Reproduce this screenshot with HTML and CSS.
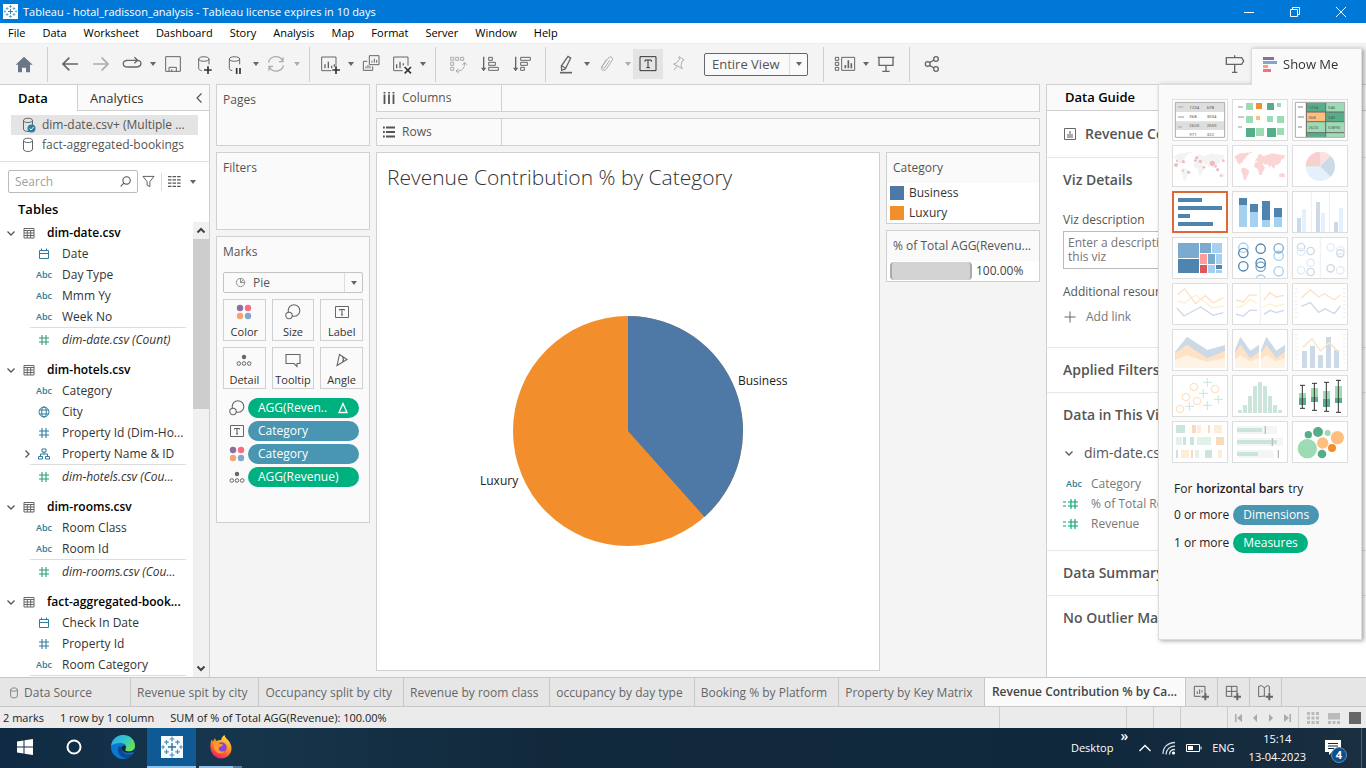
FILE: index.html
```html
<!DOCTYPE html>
<html lang="en">
<head>
<meta charset="utf-8">
<title>Tableau - hotal_radisson_analysis</title>
<link rel="stylesheet" href="styles.css">
</head>
<body>
<svg class="defs" aria-hidden="true">
  <symbol id="i-table" viewBox="0 0 12 12"><path d="M1 1.5h10v9.5H1zM1 3.5h10M1 6h10M1 8.500h10M4.300 3.500v7.500M7.700 3.500v7.500" fill="none" stroke="#666"/></symbol>
  <symbol id="i-down" viewBox="0 0 12 12"><path d="M2.500 4.500 6 8l3.500-3.500" fill="none" stroke="#555" stroke-width="1.300"/></symbol>
  <symbol id="i-right" viewBox="0 0 12 12"><path d="M4.500 2.500 8 6 4.500 9.500" fill="none" stroke="#555" stroke-width="1.300"/></symbol>
  <symbol id="i-cal" viewBox="0 0 12 12"><path d="M1.500 2.500h9v8h-9zM1.500 5.500h9M3.500 .5v2M8.500 .5v2" fill="none" stroke="#2e7d9c"/></symbol>
  <symbol id="i-hash" viewBox="0 0 12 12"><path d="M4 1v10M8 1v10M1 4h10M1 8h10" fill="none" stroke="currentColor" stroke-width="1.100"/></symbol>
  <symbol id="i-measure" viewBox="0 0 16 12"><path d="M8 1v10M12 1v10M5 4h10M5 8h10M0 4h3M0 8h3" fill="none" stroke="#00a277" stroke-width="1.100"/></symbol>
  <symbol id="i-globe" viewBox="0 0 12 12"><g fill="none" stroke="#2e7d9c"><circle cx="6" cy="6" r="5"/><ellipse cx="6" cy="6" rx="2.300" ry="5"/><path d="M1.500 4h9M1.500 8h9"/></g></symbol>
  <symbol id="i-hier" viewBox="0 0 12 12"><path d="M4 1h4v3H4zM.5 8.500h4v2.500h-4zM7.500 8.500h4v2.500h-4zM6 4v2M2.500 8.500V6h7v2.500" fill="none" stroke="#2e7d9c"/></symbol>
  <symbol id="i-db" viewBox="0 0 12 16"><path d="M1.500 3.500v8.500c0 3.300 9 3.300 9 0V3.500c0-3-9-3-9 0 0 2.700 9 2.700 9 0" fill="none" stroke="#666"/></symbol>
  <symbol id="i-colors" viewBox="0 0 16 16"><circle cx="4" cy="4" r="3.200" fill="#8c6f9c"/><circle cx="12" cy="4" r="3.200" fill="#fa6d80"/><circle cx="4" cy="12" r="3.200" fill="#f4a471"/><circle cx="12" cy="12" r="3.200" fill="#83a6cd"/></symbol>
  <symbol id="i-size" viewBox="0 0 16 16"><g fill="none" stroke="#666" stroke-width="1.100"><circle cx="9" cy="6.500" r="5.800"/><circle cx="4" cy="11.500" r="3.200" fill="#fafafa"/></g></symbol>
  <symbol id="i-label" viewBox="0 0 16 16"><path d="M1.500 2.500h13v11h-13z" fill="none" stroke="#666"/><path d="M5.500 6.500v-1h5v1M8 5.500v5.500M7 11h2" fill="none" stroke="#555"/></symbol>
  <symbol id="i-detail" viewBox="0 0 16 16"><circle cx="8" cy="5" r="2.200" fill="#666"/><g fill="none" stroke="#666"><circle cx="2.800" cy="11.500" r="1.800"/><circle cx="8" cy="11.500" r="1.800"/><circle cx="13.200" cy="11.500" r="1.800"/></g></symbol>
  <symbol id="i-logo" viewBox="0 0 24 24"><path d="M12 8v8M8 12h8" stroke="#2a6fa5" stroke-width="1.400"/><path d="M12 1.500v5M9.500 4h5M12 17.500v5M9.500 20h5M6.500 5v4.500M4.300 7.200h4.500M17.500 5v4.500M15.300 7.200h4.500M6.500 14.500V19M4.300 16.800h4.500M17.500 14.500V19M15.300 16.800h4.500M3 10.300v3.400M1.300 12h3.400M21 10.300v3.400M19.300 12h3.400" stroke="#4a90bd" stroke-width="1.200"/></symbol>
</svg>

<header class="titlebar">
  <svg class="applogo" viewBox="0 0 24 24"><rect width="24" height="24" fill="#fff"/><use href="#i-logo"/></svg>
  <span>Tableau - hotal_radisson_analysis - Tableau license expires in 10 days</span>
  <div class="wincontrols">
    <button aria-label="Minimize"><svg viewBox="0 0 12 12"><path d="M1 6.500h10"/></svg></button>
    <button aria-label="Restore"><svg viewBox="0 0 12 12"><path d="M1.500 3.500h7v7h-7zM3.500 3.500v-2h7v7h-2"/></svg></button>
    <button aria-label="Close"><svg viewBox="0 0 12 12"><path d="M1 1l10 10M11 1 1 11"/></svg></button>
  </div>
</header>

<nav class="menubar">
  <button>File</button><button>Data</button><button>Worksheet</button><button>Dashboard</button><button>Story</button><button>Analysis</button><button>Map</button><button>Format</button><button>Server</button><button>Window</button><button>Help</button>
</nav>

<div class="toolbar">
  <div class="tgroup home">
    <button aria-label="Start"><svg viewBox="36 156 72 72"><path d="M72 170 47 194h7v23h12v-14h12v14h12v-23h8z" fill="#6b7786"/></svg></button>
  </div>
  <div class="tgroup">
    <button aria-label="Undo"><svg viewBox="174 156 72 72"><path d="M234 192h-45M208 173l-19 19 19 19" class="s5"/></svg></button>
    <button aria-label="Redo" class="dim"><svg viewBox="270 156 72 72"><path d="M282 192h45M308 173l19 19-19 19" class="s5"/></svg></button>
    <button aria-label="Replay"><svg viewBox="360 156 72 72"><path d="M384 181c-19 0-19 20 0 20h24c19 0 19-20 4-20M378 181h34M403 172l10 9-10 9" class="s4"/></svg></button>
    <i class="caret"></i>
    <button aria-label="Save"><svg viewBox="486 156 72 72"><path d="M500 170h44v44h-44zM510 214v-12h22v12M518 214v-6" class="s3"/></svg></button>
    <button aria-label="New data source"><svg viewBox="579 156 72 72"><path d="M608 212c-6-1-9-4-9-7v-28c0-9 31-9 31 0v16M599 177c0 9 31 9 31 0" class="s3"/><path d="M627 199v23M615 210h23" class="k5"/></svg></button>
    <button aria-label="Pause updates"><svg viewBox="672 156 72 72"><path d="M700 212c-6-1-9-4-9-7v-28c0-9 31-9 31 0v16M691 177c0 9 31 9 31 0" class="s3"/><path d="M713 204v18M723 204v18" class="k5"/></svg></button>
    <i class="caret"></i>
    <button aria-label="Run update" class="dim"><svg viewBox="792 156 72 72"><path d="M806 188c3-22 34-25 42-4M850 196c-3 20-33 24-42 4M849 172v13h-12M807 212v-13h12" class="s4"/></svg></button>
    <i class="caret dim"></i>
  </div>
  <div class="tgroup sheets">
    <button aria-label="New worksheet"><svg viewBox="954 156 72 72"><path d="M994 212h-29v-41h43v26" class="s3"/><path d="M975 205v-12M985 205v-20M995 205v-8M1003 200v-7" class="s4"/><path d="M1008 199v23M997 210h23" class="k5"/></svg></button>
    <i class="caret"></i>
    <button aria-label="Duplicate"><svg viewBox="1078 156 72 72"><path d="M1109 167h29v27h-29zM1103 184h-12v27h28v-12" class="s3"/><path d="M1117 188v-6M1124 188v-12M1131 188v-8M1099 205v-6M1105 205v-10M1111 205v-7" class="s3"/></svg></button>
    <button aria-label="Clear sheet"><svg viewBox="1170 156 72 72"><path d="M1208 212h-27v-41h43v26" class="s3"/><path d="M1190 205v-12M1200 205v-20M1210 196v-6" class="s4"/><path d="M1214 201l19 19M1233 201l-19 19" class="k5"/></svg></button>
    <i class="caret"></i>
  </div>
  <div class="tgroup sorts">
    <button aria-label="Swap" class="dim"><svg viewBox="15 156 72 72"><path d="M29 172h9v9h-9zM44 172h9v9h-9zM59 172h9v9h-9zM29 187h9v9h-9zM29 202h9v9h-9zM45 213c18 2 26-8 26-25M53 206l-8 7 8 7M64 195l7-8 6 8" class="s3"/></svg></button>
    <button aria-label="Sort ascending"><svg viewBox="114 156 72 72"><path d="M131 170v36" class="s4"/><path d="M123 203h16l-8 11z" fill="#666"/><path d="M146 172h11v9h-11zM146 187h20v9h-20zM146 202h29v9h-29z" class="s3"/></svg></button>
    <button aria-label="Sort descending"><svg viewBox="210 156 72 72"><path d="M227 170v36" class="s4"/><path d="M219 203h16l-8 11z" fill="#666"/><path d="M242 172h29v9h-29zM242 187h20v9h-20zM242 202h11v9h-11z" class="s3"/></svg></button>
  </div>
  <div class="tgroup marksgroup">
    <button aria-label="Highlight"><svg viewBox="348 156 72 72"><path d="M390 169l8 5-16 33-11 4-1-13zM372 198l10 6" class="s4"/><path d="M366 218h36" class="s5"/></svg></button>
    <i class="caret"></i>
    <button aria-label="Group" class="dim"><svg viewBox="459 156 72 72"><path d="M503 181l-14 21c-3 6-11 1-7-5l16-22c7-9 18-2 12 7l-17 25c-8 9-18 2-14-6l14-22" class="s3"/></svg></button>
    <i class="caret dim"></i>
    <button aria-label="Show mark labels" class="on"><svg viewBox="586 156 72 72"><path d="M598 170h48v42h-48z" class="k3"/><path d="M613 185v-5h19v5M622 180v23M617 203h11" class="k3"/></svg></button>
    <button aria-label="Fix axes" class="dim"><svg viewBox="675 156 72 72"><path d="M711 170l15 10-6 4-3 13 4 9-26-14 7-2 10-11zM705 199l-9 11" class="s3"/></svg></button>
  </div>
  <div class="tgroup fit">
    <div class="selectbox"><select aria-label="Fit"><option>Entire View</option></select><i class="caret"></i></div>
  </div>
  <div class="tgroup cardsgroup">
    <button aria-label="Show/Hide cards"><svg viewBox="1182 156 72 72"><path d="M1189 172h10v9h-10zM1189 187h10v9h-10zM1189 202h10v9h-10zM1208 172h39v39h-39z" class="s3"/><path d="M1219 205v-10M1228 205v-24M1237 205v-15" class="s5"/></svg></button>
    <i class="caret"></i>
    <button aria-label="Presentation mode"><svg viewBox="1300 156 72 72"><path d="M1311 172h50M1315 172h42v24h-42zM1336 196v17M1325 214h22" class="s4"/></svg></button>
  </div>
  <div class="tgroup share">
    <button aria-label="Share"><svg viewBox="1440 156 72 72"><g class="s4"><circle cx="1463" cy="192" r="7"/><circle cx="1488" cy="177" r="7"/><circle cx="1488" cy="207" r="7"/><path d="M1469 188l13-8M1469 196l13 8"/></g></svg></button>
  </div>
  <button class="guidebtn" aria-label="Data Guide"><svg viewBox="789 156 72 72"><path d="M799 173h46l6 10-6 10h-46zM824 166v7M824 193v24M816 217h16" class="s4"/></svg></button>
</div>

<main class="workspace">
  <aside class="datapane">
    <div class="panetabs"><button class="active">Data</button><button>Analytics <svg viewBox="0 0 12 12"><path d="M8.500 1.500 4 6l4.500 4.500" fill="none" stroke="#555" stroke-width="1.200"/></svg></button></div>
    <div class="sources">
      <a href="#" class="sel"><svg viewBox="0 0 14 16"><use href="#i-db" width="12" height="16"/><circle cx="9.500" cy="11.500" r="4" fill="#2a7fa6"/><path d="M7.500 11.500l1.500 1.500 2.500-3" fill="none" stroke="#fff"/></svg>dim-date.csv+ (Multiple ...</a>
      <a href="#"><svg viewBox="0 0 14 16"><use href="#i-db" width="12" height="16"/></svg>fact-aggregated-bookings</a>
    </div>
    <div class="searchrow">
      <div class="search"><input type="text" aria-label="Search" placeholder="Search"><svg viewBox="0 0 12 12"><circle cx="7" cy="5" r="3.400"/><path d="M4.500 7.500 1.500 10.500"/></svg></div>
      <button aria-label="Filter fields"><svg viewBox="0 0 14 14"><path d="M1 1.500h12L8.500 7v5.500l-3-1.500V7z" fill="none" stroke="#555"/></svg></button>
      <button class="viewas" aria-label="View options"><svg viewBox="0 0 12 12"><path d="M0 1.500h12M0 4.500h12M0 7.500h12M0 10.500h12" stroke="#555" stroke-width="1.200" stroke-dasharray="3.200 1"/></svg><i class="caret"></i></button>
    </div>
    <h2>Tables</h2>
    <div class="treewrap">
      <div class="tree">
        <section>
          <h3><svg><use href="#i-down"/></svg><svg><use href="#i-table"/></svg>dim-date.csv</h3>
          <ul>
            <li><svg><use href="#i-cal"/></svg>Date</li>
            <li><b>Abc</b>Day Type</li>
            <li><b>Abc</b>Mmm Yy</li>
            <li><b>Abc</b>Week No</li>
            <li class="count"><svg><use href="#i-hash"/></svg>dim-date.csv (Count)</li>
          </ul>
        </section>
        <section>
          <h3><svg><use href="#i-down"/></svg><svg><use href="#i-table"/></svg>dim-hotels.csv</h3>
          <ul>
            <li><b>Abc</b>Category</li>
            <li><svg><use href="#i-globe"/></svg>City</li>
            <li><svg><use href="#i-hash"/></svg>Property Id (Dim-Ho...</li>
            <li class="hier"><svg><use href="#i-right"/></svg><svg><use href="#i-hier"/></svg>Property Name &amp; ID</li>
            <li class="count"><svg><use href="#i-hash"/></svg>dim-hotels.csv (Cou...</li>
          </ul>
        </section>
        <section>
          <h3><svg><use href="#i-down"/></svg><svg><use href="#i-table"/></svg>dim-rooms.csv</h3>
          <ul>
            <li><b>Abc</b>Room Class</li>
            <li><b>Abc</b>Room Id</li>
            <li class="count"><svg><use href="#i-hash"/></svg>dim-rooms.csv (Cou...</li>
          </ul>
        </section>
        <section>
          <h3><svg><use href="#i-down"/></svg><svg><use href="#i-table"/></svg>fact-aggregated-book...</h3>
          <ul>
            <li><svg><use href="#i-cal"/></svg>Check In Date</li>
            <li><svg><use href="#i-hash"/></svg>Property Id</li>
            <li><b>Abc</b>Room Category</li>
            <li class="count"></li>
          </ul>
        </section>
      </div>
      <div class="scrollbar"><svg viewBox="0 0 12 12"><path d="M2.500 8 6 4.500 9.500 8"/></svg><i></i><svg viewBox="0 0 12 12"><path d="M2.500 4 6 7.500 9.500 4"/></svg></div>
    </div>
  </aside>

  <div class="shelves">
    <section class="card pages"><h4>Pages</h4></section>
    <section class="card filters"><h4>Filters</h4></section>
    <section class="card marks">
      <h4>Marks</h4>
      <div class="selectbox marktype"><svg viewBox="0 0 12 12"><g fill="none" stroke="#888"><circle cx="6" cy="6" r="4.500"/><path d="M6 1.500V6h4.500M6 6l3-3"/></g></svg><select aria-label="Mark type"><option>Pie</option></select><i class="caret"></i></div>
      <div class="markbtns">
        <button><svg><use href="#i-colors"/></svg>Color</button>
        <button><svg><use href="#i-size"/></svg>Size</button>
        <button><svg><use href="#i-label"/></svg>Label</button>
        <button><svg><use href="#i-detail"/></svg>Detail</button>
        <button><svg viewBox="0 0 16 16"><path d="M1 2.500h14v9h-3v3l-3-3H1z" fill="none" stroke="#666" stroke-width="1.100"/></svg>Tooltip</button>
        <button><svg viewBox="0 0 16 16"><path d="M3 13.500 5.500 2.500l7.500 5zM8.500 4.500c1.200 2 1.200 4 0 6" fill="none" stroke="#666" stroke-width="1.100"/></svg>Angle</button>
      </div>
      <ul class="pills">
        <li><svg><use href="#i-size"/></svg><button class="pill measure">AGG(Reven..<svg viewBox="0 0 12 12"><path d="M6 1.500 10 10.500H2z" fill="none" stroke="#fff" stroke-width="1.300"/></svg></button></li>
        <li><svg><use href="#i-label"/></svg><button class="pill">Category</button></li>
        <li><svg><use href="#i-colors"/></svg><button class="pill">Category</button></li>
        <li><svg><use href="#i-detail"/></svg><button class="pill measure">AGG(Revenue)</button></li>
      </ul>
    </section>
  </div>

  <div class="sheet">
    <div class="shelf"><span><svg viewBox="0 0 12 12"><path d="M1.500 0v1.500M6 0v1.500M10.500 0v1.500M1.500 2.500V12M6 2.500V12M10.500 2.500V12" stroke="#555" stroke-width="1.800"/></svg>Columns</span></div>
    <div class="shelf"><span><svg viewBox="0 0 12 12"><path d="M0 1.500h1.800M0 6h1.800M0 10.500h1.800M3 1.500h9M3 6h9M3 10.500h9" stroke="#555" stroke-width="1.800"/></svg>Rows</span></div>
    <div class="viewrow">
      <section class="view">
        <h1>Revenue Contribution % by Category</h1>
        <svg class="pie" viewBox="0 0 330 232" role="img" aria-label="Revenue share of Business and Luxury">
          <circle cx="165" cy="116" r="115" fill="#f28e2b"/>
          <path d="M165 116V1A115 115 0 0 1 241.500 201.900z" fill="#4e79a7"/>
          <text x="275" y="70">Business</text><text x="17" y="170">Luxury</text>
        </svg>
      </section>
      <div class="legends">
        <section class="card legend"><h4>Category</h4><ul><li><i class="business"></i>Business</li><li><i class="luxury"></i>Luxury</li></ul></section>
        <section class="card legend"><h4>% of Total AGG(Revenu...</h4><div class="sizekey"><i></i>100.00%</div></section>
      </div>
    </div>
  </div>

  <aside class="guide">
    <h2>Data Guide</h2>
    <div class="gname"><svg viewBox="0 0 12 12"><path d="M.5.5h11v11H.5z" fill="none" stroke="#666"/><path d="M3 6h2V3h2v3h2v4H3z" fill="#aaa"/></svg>Revenue Contribution</div>
    <div class="gsec details">
      <h3>Viz Details</h3>
      <label for="vizdesc">Viz description</label>
      <textarea id="vizdesc" placeholder="Enter a description for&#10;this viz"></textarea>
      <p>Additional resources</p>
      <button><svg viewBox="0 0 12 12"><path d="M6 .5v11M.5 6h11" stroke="#666"/></svg>Add link</button>
    </div>
    <div class="gsec"><h3>Applied Filters</h3></div>
    <div class="gsec fields">
      <h3>Data in This Viz</h3>
      <h4><svg><use href="#i-down"/></svg>dim-date.csv+</h4>
      <ul><li><b>Abc</b>Category</li><li><svg><use href="#i-measure"/></svg>% of Total Revenue</li><li><svg><use href="#i-measure"/></svg>Revenue</li></ul>
    </div>
    <div class="gsec"><h3>Data Summary</h3></div>
    <div class="gsec last"><h3>No Outlier Marks</h3></div>
  </aside>
</main>

<nav class="sheettabs">
  <button class="source"><svg><use href="#i-db"/></svg>Data Source</button>
  <button>Revenue spit by city</button><button>Occupancy split by city</button><button>Revenue by room class</button><button>occupancy by day type</button><button>Booking % by Platform</button><button>Property by Key Matrix</button>
  <button class="current">Revenue Contribution % by Ca...</button>
  <button class="add" aria-label="New Worksheet"><svg viewBox="699 25 54 60"><path d="M725 68h-19V38h32v20" class="s3"/><path d="M715 61v-8M722 61V47M729 56v-6" class="s3"/><path d="M739 58v22M728 69h22" class="s6"/></svg></button>
  <button class="add" aria-label="New Dashboard"><svg viewBox="795 25 54 60"><path d="M821 68h-19V38h32v20M802 53h32M818 38v30" class="s3"/><path d="M835 58v22M824 69h22" class="s6"/></svg></button>
  <button class="add" aria-label="New Story"><svg viewBox="891 25 54 60"><path d="M916 69v-2l-17 2V38l8-2 9 6 9-6 6 2v19M916 42v27" class="s3"/><path d="M931 58v22M920 69h22" class="s6"/></svg></button>
</nav>

<footer class="status">
  <span>2 marks</span><span>1 row by 1 column</span><span>SUM of % of Total AGG(Revenue): 100.00%</span>
  <div class="cells"><i class="wide"></i><i></i><i></i><i class="mid"></i>
    <div class="pager"><svg viewBox="0 0 12 12"><path d="M2 2h1.500v8H2zM9 2v8L4 6z"/></svg><svg viewBox="0 0 12 12"><path d="M8 2v8L4 6z"/></svg><svg viewBox="0 0 12 12"><path d="M4 2v8l4-4z"/></svg><svg viewBox="0 0 12 12"><path d="M3 2v8l5-4zM8.500 2H10v8H8.500z"/></svg></div>
    <div class="modes"><svg viewBox="0 0 12 12"><path d="M0 0h3v3H0zM4.500 0h3v3h-3zM9 0h3v3H9zM0 4.500h3v3H0zM4.500 4.500h3v3h-3zM9 4.500h3v3H9zM0 9h3v3H0zM4.500 9h3v3h-3zM9 9h3v3H9z"/></svg><svg viewBox="0 0 12 12"><path d="M0 1h12v6.500H0zM0 9h3v3H0zM4.500 9h3v3h-3zM9 9h3v3H9z"/></svg><svg class="dark" viewBox="0 0 12 12"><path d="M0 0h12v12H0z"/></svg></div>
  </div>
</footer>

<footer class="taskbar">
  <button aria-label="Start"><svg viewBox="0 0 24 24"><path d="M4 6.500l6.500-1v6H4zM11.500 5.300 20 4v7.500h-8.500zM4 12.500h6.500v6L4 17.500zM11.500 12.500H20V20l-8.500-1.300z" fill="#fff"/></svg></button>
  <button aria-label="Cortana"><svg viewBox="0 0 24 24"><circle cx="12" cy="12" r="6.500" fill="none" stroke="#fff" stroke-width="2"/></svg></button>
  <button aria-label="Edge"><svg viewBox="0 0 24 24"><defs><linearGradient id="eg" x1="0" y1="0" x2="1" y2=".6"><stop offset="0" stop-color="#2aa6e8"/><stop offset=".6" stop-color="#38c9c8"/><stop offset="1" stop-color="#6ae24a"/></linearGradient></defs><circle cx="12" cy="12" r="12" fill="#0b78cf"/><path d="M.2 11C1 4 6 0 12 0c7 0 12 5 12 10.500 0 4-3 6-6.500 6-3 0-4-1-3-2.500 2-4-1-6-5-6-4 0-8 1-9.300 3z" fill="url(#eg)"/><path d="M8 11c-3 5 0 12 8 12.300 3-1 5-3 6.500-5-7 3-13-1-12-5.500z" fill="#0c4a8f"/><path d="M10.500 12c-1 3.500 3 7.500 12.500 5l1-4c-1 2.500-4 3.700-6.500 3.500-3 0-4-1-3-2.500.5-1 .5-2.500-.5-3.500-1.500 0-3 .5-3.500 1.500z" fill="#12293c"/></svg></button>
  <button class="active" aria-label="Tableau"><svg viewBox="0 0 24 24"><rect x="1" y="1" width="22" height="22" fill="#f8fafc"/><use href="#i-logo"/></svg></button>
  <button class="running" aria-label="Firefox"><svg viewBox="0 0 24 24"><defs><linearGradient id="fx" x1=".8" y1="0" x2=".3" y2="1"><stop offset="0" stop-color="#ffe94a"/><stop offset=".5" stop-color="#ff8a1f"/><stop offset="1" stop-color="#f5156c"/></linearGradient></defs><path d="M2.500 4.500 4 6.500 6 3l1 3c2-1 4-1 5-1 1-3 2-4 3.500-5 .5 3 3 4 5 7 5 8 0 16.500-8.500 16.500C4 23.500-1 15 2.500 4.500z" fill="url(#fx)"/><circle cx="12.500" cy="12.500" r="5.200" fill="#8445d8"/><path d="M4 8c3-1.500 5-.5 7 1 2 0 3 .5 3 1.500l-4 2c-1 4 4 5 6 3-1 4-8 4-10 0S5 9 4 8z" fill="#ff9a2a"/></svg></button>
  <div class="tray">
    <span>Desktop</span><span class="more">»</span>
    <svg viewBox="0 0 14 14"><path d="M1.500 10 7 4.500l5.500 5.500" fill="none" stroke="#fff" stroke-width="1.300"/></svg>
    <svg viewBox="0 0 14 14"><g fill="none" stroke="#d5dce2" stroke-width="1.300"><path d="M1 13C1 6 6 2 13 1.500M4 13.500c0-5 4-8.500 9-8.500M7.500 13.500c0-3 2-5 5.500-5"/></g><circle cx="11.500" cy="12" r="1.600" fill="#fff"/></svg>
    <svg class="battery" viewBox="0 0 16 14"><path d="M.5 3.500h13v7H.5zM15 5.500v3" fill="none" stroke="#fff"/><path d="M2 5h5v4H2z" fill="#fff"/></svg>
    <span>ENG</span>
    <div class="clock"><time>15:14</time><time>13-04-2023</time></div>
    <button class="notify" aria-label="Notifications"><svg viewBox="0 0 18 18"><path d="M1 1h16v12H8l-3 3v-3H1z" fill="#fff"/><path d="M4 4.500h10M4 7h10M4 9.500h6" stroke="#12293c"/></svg><b>4</b></button>
  </div>
</footer>

<section class="showme">
  <button class="smtab"><svg viewBox="0 0 14 15"><path d="M0 0h11v3H0z" fill="#8c6f9c"/><path d="M0 4h14v3H0z" fill="#83a6cd"/><path d="M0 8h5v3H0z" fill="#f4a471"/><path d="M0 12h8v3H0z" fill="#fa6d80"/></svg>Show Me</button>
  <div class="smbody">
    <div class="smgrid">
      <button aria-label="text tables"><svg viewBox="39 30 162 120"><path d="M46 37h148v105H46z" fill="#fff"/><path d="M47 38h146v28H47zM47 94h146v26H47z" fill="#dedede"/><path d="M46 37h148v105H46z" fill="none" stroke="#aaa" stroke-width="3"/><path d="M54 51h16M54 81h18M54 111h12" stroke="#bbb" stroke-width="5"/><g class="tiny"><text x="88" y="57">1234</text><text x="140" y="57">678</text><text x="88" y="84">368</text><text x="140" y="84">3034</text><text x="88" y="111">2620</text><text x="140" y="111">2559</text><text x="88" y="138">971</text><text x="140" y="138">322</text></g></svg></button>
      <button aria-label="heat maps"><svg viewBox="219 30 162 120"><path d="M234 51h15M234 81h18M234 111h12" stroke="#bbb" stroke-width="5"/><path d="M258 39h21v21h-21zM351 39h12v12h-12zM258 78h21v21h-21zM321 78h18v18h-18zM351 78h21v21h-21zM288 114h24v24h-24zM351 114h21v21h-21z" fill="#9ddbb4"/><path d="M321 39h21v21h-21zM258 114h27v27h-27zM321 114h27v27h-27z" fill="#56ad89"/><path d="M288 39h18v18h-18z" fill="#f28e2b"/><path d="M288 78h12v12h-12z" fill="#ffbe7d"/></svg></button>
      <button aria-label="highlight tables"><svg viewBox="399 30 162 120"><path d="M439 37h58v29h-58zM497 66h57v29h-57zM439 128h58v14h-58z" fill="#56ad89"/><path d="M497 37h57v29h-57zM439 95h115v33H439zM497 128h57v14h-57z" fill="#9ddbb4"/><path d="M439 66h58v29h-58z" fill="#ffbe7d"/><path d="M439 37v105M497 37v105M439 66h115M439 95h115M439 128h115" stroke="#666" stroke-width="3"/><path d="M406 37h148v105H406z" fill="none" stroke="#aaa" stroke-width="3"/><path d="M414 51h15M414 81h18M414 111h12" stroke="#aaa" stroke-width="5"/><g class="tiny"><text x="445" y="56">1234</text><text x="504" y="56">546</text><text x="445" y="86">368</text><text x="504" y="86">340</text><text x="445" y="116">2620</text><text x="504" y="116">53890</text></g></svg></button>
      <button aria-label="symbol maps"><svg class="outline" viewBox="39 168 162 120"><g id="world"><path d="M41 202l10-8 8-4 16-1 8-2 5 4-9 8-4 6-5 5-4 8-8 2 6 7-9-5-6-9-2-7zM65 233l11 2 11 7-4 13-8 15-4 2-3-16-6-14zM104 212l8-11 3-8 8 0 4 6 14-4 14-5 26 4 14 2-4 9-8 4-3 9-7 5-9 3-1 9-6-2-4-8-6 8-5-11-7 3-5-5-7 2-8-6zM103 218l10-2 12 4 9 13-6 12-5 10-6 0-4-18-11-6zM177 252l9-4 8 5-1 9-17-2zM86 186l10-1-4 6z"/></g><g fill="#e9a9ad" opacity=".75"><circle cx="48" cy="225" r="6"/><circle cx="51" cy="213" r="3"/><circle cx="70" cy="215" r="5"/><circle cx="110" cy="203" r="5"/><circle cx="121" cy="214" r="5"/><circle cx="106" cy="212" r="4"/><circle cx="157" cy="220" r="8"/><circle cx="173" cy="239" r="5"/><circle cx="167" cy="229" r="4"/><circle cx="86" cy="247" r="5"/><circle cx="69" cy="242" r="3"/><circle cx="132" cy="232" r="4"/><circle cx="183" cy="257" r="3"/><circle cx="190" cy="212" r="4"/></g></svg></button>
      <button aria-label="maps"><svg class="filled" viewBox="219 168 162 120"><use href="#world" x="181"/></svg></button>
      <button aria-label="pie charts"><svg viewBox="399 168 162 120"><circle cx="481" cy="229" r="44" fill="#e4f1fc"/><path d="M481 229h-44a44 44 0 0 1 44-44z" fill="#f8d0ce"/><path d="M481 229v-44a44 44 0 0 1 31 13z" fill="#fee0e0"/><path d="M481 229l31-31a44 44 0 0 1 0 62z" fill="#ccd9e7"/></svg></button>
      <button class="picked" aria-label="horizontal bars"><svg viewBox="39 306 162 120"><path d="M54 324h72v12H54zM54 348h132v12H54zM54 372h36v12H54zM54 396h105v12H54z" fill="#4e84ad"/></svg></button>
      <button aria-label="stacked bars"><svg viewBox="219 306 162 120"><path d="M237 324h24v87h-24zM270 342h24v69h-24zM306 333h24v78h-24zM342 354h24v57h-24z" fill="#a5d0f0"/><path d="M237 324h24v21h-24zM270 342h24v24h-24zM306 333h24v57h-24zM342 354h24v27h-24z" fill="#4e84ad"/></svg></button>
      <button aria-label="side-by-side bars"><svg viewBox="399 306 162 120"><path d="M454 306v120M508 306v120" stroke="#eee" stroke-width="3"/><path d="M411 384h12v42h-12zM468 336h12v90h-12zM522 396h12v30h-12z" fill="#ccd9e7"/><path d="M426 357h12v69h-12zM483 369h12v57h-12zM537 354h12v72h-12z" fill="#e4f1fc"/></svg></button>
      <button aria-label="treemaps"><svg viewBox="39 444 162 120"><path d="M54 459h63v45H54zM120 459h33v30h-33zM144 492h21v30h-21z" fill="#7aaace"/><path d="M54 507h63v42H54zM168 525h18v12h-18z" fill="#4e84ad"/><path d="M156 459h30v30h-30zM168 492h18v30h-18zM144 525h21v24h-21zM168 540h18v9h-18z" fill="#a5d0f0"/><path d="M120 492h21v30h-21z" fill="#ff9d9a"/><path d="M120 525h21v24h-21z" fill="#e15759"/></svg></button>
      <button aria-label="circle views"><svg viewBox="219 444 162 120"><g fill="none" stroke-width="4"><g stroke="#a5d0f0"><circle cx="250" cy="473" r="14"/><circle cx="356" cy="497" r="14"/><circle cx="356" cy="544" r="14"/><circle cx="302" cy="569" r="14"/></g><g stroke="#7aaace"><circle cx="356" cy="475" r="14"/><circle cx="302" cy="530" r="14"/></g><g stroke="#4e84ad"><circle cx="250" cy="489" r="14"/><circle cx="250" cy="529" r="14"/><circle cx="302" cy="476" r="14"/><circle cx="302" cy="519" r="14"/></g></g></svg></button>
      <button aria-label="side-by-side circles"><svg viewBox="399 444 162 120"><path d="M481 444v120" stroke="#eee" stroke-width="3"/><g fill="none" stroke-width="4"><g stroke="#ccd9e7"><circle cx="423" cy="471" r="11"/><circle cx="452" cy="483" r="11"/><circle cx="452" cy="546" r="11"/><circle cx="541" cy="490" r="11"/><circle cx="512" cy="535" r="11"/></g><g stroke="#e0edf8"><circle cx="423" cy="486" r="11"/><circle cx="452" cy="518" r="11"/><circle cx="423" cy="541" r="11"/><circle cx="512" cy="472" r="11"/><circle cx="541" cy="481" r="11"/><circle cx="541" cy="541" r="11"/></g></g></svg></button>
      <button aria-label="lines (continuous)"><svg class="ln" viewBox="39 24 162 120"><path class="y" d="M51 75l22 6 34-24 50 39 33-6"/><path class="o" d="M53 56l20-18 34 45 29-24 24 22 30-16"/><path class="b" d="M50 96l22 24 50-27 37 25 31-8"/></svg></button>
      <button aria-label="lines (discrete)"><svg class="ln" viewBox="219 24 162 120"><path d="M301 24v120" class="rule"/><path class="y" d="M228 94l22-4 19-20 22 12M309 93l22-9 18 8 23-8"/><path class="o" d="M228 72l22 6 19-22 22 3M312 72l18-23 18 14 24-5"/><path class="b" d="M228 114l22 7 19-18h22M312 115l18-12 18 7 24-7"/></svg></button>
      <button aria-label="dual lines"><svg class="ln" viewBox="399 24 162 120"><path d="M409 37v96M553 37v96" class="ticks"/><path class="o" d="M424 66l27-25 25 22 18-10 29 19 18-15"/><path class="b" d="M424 91l27-11 25 29 19-11 28 15 18-23"/></svg></button>
      <button aria-label="area charts (continuous)"><svg viewBox="39 162 162 120"><path d="M45 227l36-45 61 40 53-15v69H45z" fill="#ccd9e7"/><path d="M45 231l36-25 61 41 53-23v52H45z" fill="#fde2c6"/><path d="M45 252l36-14 61 20 53-13v31H45z" fill="#fff3e5"/></svg></button>
      <button aria-label="area charts (discrete)"><svg viewBox="219 162 162 120"><path d="M225 222l16-40 30 42 26-18v70h-72zM303 222l16-40 30 42 26-18v70h-72z" fill="#ccd9e7"/><path d="M225 232l16-26 30 41 26-20v49h-72zM303 232l16-26 30 41 26-20v49h-72z" fill="#fde2c6"/><path d="M225 250l16-12 30 18 26-10v30h-72zM303 250l16-12 30 18 26-10v30h-72z" fill="#fff3e5"/></svg></button>
      <button aria-label="dual combination"><svg class="ln" viewBox="399 162 162 120"><path d="M409 175v96M553 175v96" class="ticks"/><path d="M426 225h15v51h-15zM450 210h15v66h-15zM474 237h15v39h-15zM498 183h15v93h-15zM522 222h15v54h-15z" fill="#ccd9e7"/><path class="o" d="M429 213l27-25 25 37 26-25 27 26"/></svg></button>
      <button aria-label="scatter plots"><svg viewBox="39 300 162 120"><g fill="none" stroke="#fde2c6" stroke-width="4"><circle cx="102" cy="333" r="11"/><circle cx="165" cy="339" r="11"/><circle cx="78" cy="363" r="11"/><circle cx="111" cy="375" r="11"/><circle cx="60" cy="399" r="11"/></g><path d="M142 306v27M129 319h27M130 339v27M117 352h27M175 357v27M162 370h27M142 375v27M129 388h27M88 378v27M75 391h27" stroke="#cce5db" stroke-width="3"/></svg></button>
      <button aria-label="histogram"><svg viewBox="219 300 162 120"><path d="M234 402h12v9h-12zM249 387h12v24h-12zM264 360h12v51h-12zM279 330h12v81h-12zM294 318h12v93h-12zM309 330h12v81h-12zM324 360h12v51h-12zM339 387h12v24h-12zM354 402h12v9h-12z" fill="#cce5db"/></svg></button>
      <button aria-label="box-and-whisker plots"><svg viewBox="399 300 162 120"><path d="M417 351h21v15h-21zM453 336h21v27h-21zM489 345h21v24h-21zM525 330h21v36h-21z" fill="#9ddbb4"/><path d="M417 366h21v21h-21zM453 363h21v15h-21zM489 369h21v24h-21zM525 366h21v15h-21z" fill="#56ad89"/><path d="M427 328v69M420 328h15M420 397h15M463 322v81M456 322h15M456 403h15M499 319v87M492 319h15M492 406h15M535 313v96M528 313h15M528 409h15" stroke="#333" stroke-width="3"/></svg></button>
      <button aria-label="gantt"><svg viewBox="39 438 162 120"><path d="M48 447h27v24H48zM69 483h9v24h-9zM90 483h12v24H90zM48 522h6v24h-6zM135 522h21v24h-21z" fill="#cce5db"/><path d="M48 483h18v24H48zM111 483h42v24h-42zM105 522h12v24h-12z" fill="#e2f2e9"/><path d="M96 447h12v24H96zM144 447h6v24h-6zM168 483h24v24h-24zM93 522h6v24h-6z" fill="#fbd9bb"/><path d="M111 447h12v24h-12zM162 447h24v24h-24zM63 522h24v24H63zM174 522h12v24h-12z" fill="#feecd9"/></svg></button>
      <button aria-label="bullet graphs"><svg viewBox="219 438 162 120"><path d="M231 450h120v24H231zM231 486h138v24H231zM231 522h110v24H231z" fill="#f5f5f5"/><path d="M231 456h75v12h-75zM231 492h120v12H231zM231 528h63v12h-63z" fill="#cce5db"/><path d="M316 450v24M337 486v24M355 522v24" stroke="#bbb" stroke-width="4"/></svg></button>
      <button aria-label="packed bubbles"><svg viewBox="399 438 162 120"><circle cx="442" cy="518" r="29" fill="#9ddbb4"/><circle cx="503" cy="471" r="9" fill="#9ddbb4"/><g fill="#56ad89"><circle cx="445" cy="476" r="11"/><circle cx="474" cy="468" r="15"/><circle cx="486" cy="534" r="13"/></g><g fill="#ffbe7d"><circle cx="532" cy="485" r="20"/><circle cx="488" cy="501" r="17"/></g><circle cx="516" cy="516" r="12" fill="#f28e2b"/></svg></button>
    </div>
    <p>For <b>horizontal bars</b> try</p>
    <p>0 or more <span class="pill">Dimensions</span></p>
    <p>1 or more <span class="pill measure">Measures</span></p>
  </div>
</section>
</body>
</html>
```
FILE: styles.css
```css
* { box-sizing: border-box; }
body {
  margin: 0;
  height: 100vh;
  display: flex;
  flex-direction: column;
  position: relative;
  overflow: hidden;
  background: #f4f4f4;
  color: #333;
  font: 12px/16px "Open Sans", "Noto Sans", sans-serif;
}
.defs { position: absolute; width: 0; height: 0; }
button {
  font: inherit;
  color: inherit;
  background: none;
  border: 0;
  padding: 0;
  margin: 0;
}
select, input, textarea { font: inherit; color: inherit; }
h1, h2, h3, h4, p, ul { margin: 0; padding: 0; font-weight: 400; font-size: 12px; list-style: none; }
svg { flex: none; width: 12px; height: 12px; }
.caret {
  flex: none;
  width: 9px;
  display: flex;
  justify-content: center;
}
.caret::before {
  content: "";
  border: 3px solid transparent;
  border-top: 4px solid #666;
  border-bottom: 0;
}

/* window chrome */
.titlebar {
  flex: none;
  height: 23px;
  display: flex;
  align-items: center;
  padding: 0 2px 0 3px;
  gap: 5px;
  background: #0078d7;
  color: #fff;
  font-size: 11px;
}
.titlebar .applogo { width: 15px; height: 15px; }
.wincontrols { margin-left: auto; display: flex; }
.wincontrols button { width: 46px; height: 21px; display: flex; justify-content: center; align-items: center; }
.wincontrols svg { fill: none; stroke: #fff; }
.menubar {
  flex: none;
  height: 20px;
  display: flex;
  gap: 17px;
  padding-left: 8px;
  background: #fff;
  color: #000;
  font-size: 11px;
}

/* toolbar */
.toolbar {
  flex: none;
  height: 41px;
  display: flex;
  align-items: center;
  border-top: 1px solid #eee;
  padding-right: 116px;
}
.toolbar .s3, .toolbar .s4, .toolbar .s5 { fill: none; stroke: #666; stroke-width: 3; }
.toolbar .s4 { stroke-width: 4; }
.toolbar .s5 { stroke-width: 5; }
.toolbar .k3, .toolbar .k5 { fill: none; stroke: #333; stroke-width: 3; }
.toolbar .k5 { stroke-width: 5; }
.tgroup {
  display: flex;
  align-items: center;
  gap: 1px;
  height: 35px;
  padding: 0 8px 0 7px;
  border-right: 1px solid #cfcfcf;
}
.tgroup button, .guidebtn { width: 30px; height: 30px; display: flex; align-items: center; justify-content: center; }
.tgroup button svg, .guidebtn svg { width: 24px; height: 24px; }
.tgroup.home { padding-left: 9px; }
.tgroup.sheets { padding-left: 5px; }
.tgroup.sorts { padding-left: 7px; gap: 2px; }
.tgroup.marksgroup { padding: 0 10px 0 5px; border: 0; }
.tgroup.fit { padding: 0 15px 0 0; }
.tgroup.cardsgroup { padding-left: 6px; }
.tgroup.share { border: 0; }
.dim { opacity: .5; }
.on { background: #e4e4e4; }
.guidebtn { margin-left: auto; }
.selectbox { position: relative; display: flex; }
.selectbox select {
  appearance: none;
  width: 104px;
  height: 23px;
  padding: 0 7px;
  border: 1px solid #666;
  border-radius: 2px;
  background: #fafafa;
  font-size: 13px;
  color: #555;
}
.selectbox .caret {
  position: absolute;
  top: 1px;
  right: 1px;
  bottom: 1px;
  width: 18px;
  align-items: center;
  border-left: 1px solid #ddd;
  pointer-events: none;
}

/* workspace */
.workspace { flex: 1; min-height: 0; display: flex; gap: 6px; }
.datapane {
  flex: none;
  width: 210px;
  display: flex;
  flex-direction: column;
  min-height: 0;
  background: #fff;
  border-top: 1px solid #d0d0d0;
  border-right: 1px solid #d0d0d0;
}
.panetabs { flex: none; height: 26px; display: flex; font-size: 13px; }
.panetabs button {
  flex: 1;
  display: flex;
  align-items: center;
  justify-content: space-between;
  padding: 0 4px 0 12px;
  background: #fafafa;
  border-left: 1px solid #d0d0d0;
  border-bottom: 1px solid #d0d0d0;
}
.panetabs .active {
  flex: none;
  width: 77px;
  padding-left: 18px;
  background: #fff;
  border: 0;
  font-weight: 600;
  color: #000;
}
.sources { flex: none; padding: 4px 11px 6px; border-bottom: 1px solid #e0e0e0; }
.sources a {
  display: flex;
  align-items: center;
  gap: 6px;
  height: 20px;
  padding-left: 11px;
  color: #555;
  text-decoration: none;
  white-space: nowrap;
}
.sources a.sel { background: #e4e4e4; }
.sources svg { width: 14px; height: 16px; }
.searchrow { flex: none; display: flex; align-items: center; gap: 4px; padding: 8px 8px 0; }
.search { position: relative; width: 130px; }
.search input {
  display: block;
  width: 100%;
  height: 23px;
  padding: 0 24px 0 6px;
  border: 1px solid #bbb;
  border-radius: 2px;
}
.search input::placeholder { color: #a0a0a0; }
.search svg { position: absolute; right: 6px; top: 5px; fill: none; stroke: #555; }
.searchrow svg { width: 13px; height: 13px; }
.searchrow button { display: flex; align-items: center; }
.viewas { border-left: 1px solid #ddd; padding-left: 6px; height: 18px; gap: 7px; margin-left: 2px; }
.datapane h2 { flex: none; font-size: 13px; font-weight: 600; color: #000; line-height: 20px; padding: 6px 18px 3px; }
.treewrap { flex: 1; min-height: 0; display: flex; }
.tree { flex: 1; min-width: 0; overflow: hidden; }
.tree section { margin-bottom: 8px; }
.tree h3 {
  display: flex;
  align-items: center;
  height: 21px;
  padding-left: 5px;
  font-weight: 600;
  color: #000;
  white-space: nowrap;
}
.tree h3 svg + svg { margin: 0 12px 0 6px; }
.tree ul { padding: 0 7px 0 30px; }
.tree li { display: flex; align-items: center; height: 21px; padding-left: 5px; white-space: nowrap; }
.tree li > svg { margin: 0 12px 0 3px; color: #2e7d9c; }
.tree li b, .guide li b { width: 18px; margin-right: 9px; font-size: 9px; font-weight: 600; color: #2e7d9c; text-align: center; }
.tree li.hier { margin-left: -9px; padding-left: 0; }
.tree li.hier svg:first-child { margin: 0 2px 0 0; }
.tree li.count { height: 24px; border-top: 1px solid #ddd; font-style: italic; }
.tree li.count svg { color: #2e9c74; }
.scrollbar {
  width: 16px;
  background: #f0f0f0;
  display: flex;
  flex-direction: column;
  align-items: center;
}
.scrollbar svg { height: 17px; fill: none; stroke: #444; stroke-width: 2; }
.scrollbar i { width: 100%; height: 170px; background: #cdcdcd; margin-bottom: auto; }

/* shelves and cards */
.card { background: #fafafa; border: 1px solid #d0d0d0; }
.card h4 { color: #555; }
.shelves { flex: none; width: 154px; display: flex; flex-direction: column; gap: 6px; }
.shelves .card { padding: 7px 6px; }
.pages { height: 62px; }
.filters { height: 78px; }
.marks { min-height: 287px; }
.marktype { margin: 12px 0 6px; align-items: center; }
.marktype svg { position: absolute; left: 12px; width: 11px; height: 11px; }
.marktype select { width: 100%; height: 21px; padding-left: 29px; border-color: #c4c4c4; font-size: 12px; }
.markbtns { display: grid; grid-template-columns: repeat(3, 1fr); gap: 6px; }
.markbtns button {
  height: 42px;
  border: 1px solid #d0d0d0;
  display: flex;
  flex-direction: column;
  align-items: center;
  gap: 4px;
  padding-top: 4px;
  font-size: 11px;
}
.markbtns svg { width: 16px; height: 16px; }
.pills { padding-top: 9px; display: grid; gap: 3px; }
.pills li { display: flex; align-items: center; gap: 3px; padding: 0 4px 0 6px; }
.pills li > svg { width: 16px; height: 16px; }
.pill {
  display: inline-flex;
  align-items: center;
  justify-content: space-between;
  height: 20px;
  padding: 0 10px;
  border-radius: 10px;
  background: #4996b2;
  color: #fff;
  font-weight: 500;
}
.pill.measure { background: #00b180; }
.pills .pill { flex: 1; }
.sheet { flex: 1; min-width: 0; display: flex; flex-direction: column; gap: 6px; padding-bottom: 6px; }
.shelf { flex: none; height: 28px; background: #fafafa; border: 1px solid #d0d0d0; color: #555; }
.shelf span {
  display: flex;
  align-items: center;
  gap: 7px;
  width: 125px;
  height: 100%;
  padding-left: 6px;
  border-right: 1px solid #d0d0d0;
}
.viewrow { flex: 1; min-height: 0; display: flex; gap: 6px; }
.view { flex: 1; background: #fff; border: 1px solid #d0d0d0; display: flex; flex-direction: column; align-items: center; }
.view h1 { align-self: flex-start; padding: 10px 10px 0; font-size: 21px; font-weight: 300; line-height: 28px; color: #333; }
.pie { width: 330px; height: 232px; margin: auto 0; }
.pie text { font-size: 12px; fill: #222; }
.legends { width: 154px; display: flex; flex-direction: column; gap: 6px; }
.legend h4 { padding: 7px 6px; white-space: nowrap; }
.legend ul { background: #fff; }
.legend li { display: flex; align-items: center; height: 20px; gap: 5px; padding-left: 3px; }
.legend li i { width: 14px; height: 14px; }
.business { background: #4e79a7; }
.luxury { background: #f28e2b; }
.sizekey { display: flex; align-items: center; gap: 4px; height: 20px; padding-left: 3px; background: #fff; color: #444; }
.sizekey i { width: 82px; height: 18px; background: #d3d3d3; border: 2px solid #aaa; border-width: 0 2px; border-radius: 4px; }

/* data guide */
.guide {
  flex: none;
  width: 320px;
  background: #fff;
  border-left: 1px solid #d0d0d0;
  border-top: 1px solid #d0d0d0;
  overflow: hidden;
  color: #555;
}
.guide h2 {
  height: 26px;
  padding-left: 18px;
  line-height: 25px;
  background: #fafafa;
  border-bottom: 1px solid #d0d0d0;
  font-size: 13px;
  font-weight: 600;
  color: #000;
}
.gname, .guide h3 { font-size: 14px; font-weight: 600; line-height: 20px; }
.gname { display: flex; align-items: center; gap: 9px; height: 47px; padding-left: 17px; border-bottom: 1px solid #e8e8e8; }
.gsec { padding: 12px 16px; border-bottom: 1px solid #e8e8e8; }
.gsec.last { border: 0; }
.gsec.details { height: 190px; }
.details label { display: block; padding: 22px 0 3px; }
.details textarea {
  display: block;
  width: 100%;
  height: 38px;
  padding: 4px;
  border: 1px solid #bbb;
  resize: none;
  line-height: 14px;
}
.details p { padding: 15px 0 9px; }
.details button { display: flex; align-items: center; gap: 10px; color: #777; padding-left: 1px; }
.gsec.fields { height: 158px; }
.fields h4 { display: flex; align-items: center; gap: 9px; padding: 18px 0 11px; font-size: 14px; line-height: 20px; }
.fields li { display: flex; align-items: center; height: 20px; color: #777; }
.fields li svg { width: 16px; margin-right: 12px; }
.fields li b { margin: 0 8px 0 2px; }

/* sheet tabs and status bar */
.sheettabs { flex: none; display: flex; height: 30px; background: #e6e6e6; border-top: 1px solid #c8c8c8; border-bottom: 1px solid #c8c8c8; color: #666; }
.sheettabs button { padding: 2px 11px 0 6px; border-right: 1px solid #c8c8c8; white-space: nowrap; }
.sheettabs .source { display: flex; align-items: center; gap: 4px; width: 131px; padding-left: 8px; }
.sheettabs .current {
  width: 201px;
  padding: 0 6px;
  background: #fafafa;
  font-weight: 600;
  color: #444;
}
.sheettabs .add { width: 32px; padding: 0; display: flex; align-items: center; justify-content: center; }
.sheettabs .add svg { width: 18px; height: 20px; }
.sheettabs .s3, .sheettabs .s6 { fill: none; stroke: #666; stroke-width: 3; }
.sheettabs .s6 { stroke-width: 6; }
.status { flex: none; height: 21px; display: flex; align-items: center; gap: 16px; padding-left: 3px; background: #ebebeb; color: #222; font-size: 11px; }
.cells { margin-left: auto; display: flex; align-self: stretch; }
.cells > * { border-left: 1px solid #cdcdcd; width: 27px; }
.cells > .wide { width: 127px; }
.cells > .mid { width: 47px; }
.cells > div { display: flex; align-items: center; }
.cells > .pager { width: 71px; padding-left: 5px; gap: 4px; fill: #aaa; }
.cells > .modes { width: 68px; padding-left: 8px; gap: 9px; fill: #bbb; }
.modes .dark { fill: #666; }

/* taskbar */
.taskbar { flex: none; height: 40px; display: flex; background: linear-gradient(90deg, #0f2a42, #16364d 15%, #12293c 40%, #10283c 80%, #1a2f40); color: #fff; font-size: 11px; }
.taskbar > button { width: 49px; display: flex; align-items: center; justify-content: center; border-bottom: 2px solid transparent; }
.taskbar > button svg { width: 24px; height: 24px; }
.taskbar .active { background: #0f5a94; border-color: #8fc3ea; }
.taskbar .running { border-image: linear-gradient(90deg, transparent 10%, #8fc3ea 10% 74%, #5a7f9c 74% 90%, transparent 90%) 2; }
.tray { margin-left: auto; display: flex; align-items: center; gap: 10px; padding-right: 4px; }
.tray svg { width: 14px; height: 14px; }
.tray .more { align-self: flex-start; margin-left: -3px; font-weight: 600; font-size: 14px; }
.tray .battery { width: 16px; }
.clock { display: flex; flex-direction: column; align-items: center; line-height: 18px; padding: 0 4px; }
.notify { position: relative; align-self: stretch; width: 42px; padding-left: 4px; border-right: 1px solid #4c6070; text-align: left; }
.notify svg { display: block; width: 18px; height: 18px; }
.notify b {
  position: absolute;
  left: 11px;
  top: 19px;
  width: 16px;
  height: 16px;
  border-radius: 8px;
  border: 1px solid #5f8fb5;
  background: #0d4f8b;
  line-height: 14px;
  text-align: center;
}

/* Show Me palette */
.showme { position: absolute; top: 48px; right: 4px; width: 204px; filter: drop-shadow(2px 1px 2px rgba(0, 0, 0, .35)); }
.smtab {
  position: relative;
  display: flex;
  align-items: center;
  gap: 6px;
  width: 111px;
  height: 37px;
  margin: 0 0 -1px auto;
  padding: 0 0 6px 11px;
  background: #fafafa;
  border: 1px solid #ddd;
  border-bottom: 0;
  font-size: 13px;
  z-index: 1;
}
.smtab svg { width: 14px; height: 15px; }
.smbody { min-height: 556px; padding: 14px 13px; background: #fafafa; border: 1px solid #ddd; color: #222; }
.smgrid { display: grid; grid-template-columns: repeat(3, 56px); gap: 4px; margin-bottom: 16px; }
.smgrid button { height: 42px; border: 1px solid #ddd; background: #fff; }
.smgrid button.picked { outline: 2px solid #dc6a38; outline-offset: -2px; }
.smgrid svg { display: block; width: 54px; height: 40px; }
.smbody p { display: flex; align-items: center; gap: 4px; height: 20px; margin: 0 2px 8px; }
.smbody p b { font-weight: 600; }
.smbody p:first-of-type { margin-bottom: 6px; }
.tiny { font: 13px Roboto, sans-serif; fill: #555; }
.outline { fill: #f3f3f3; }
.filled { fill: #fbd5d4; }
.ln path { stroke-width: 4; }
.ln .y, .ln .o, .ln .b, .ln .ticks { fill: none; }
.ln .rule { stroke: #eee; stroke-width: 3; }
.ln .y { stroke: #fff0d2; }
.ln .o { stroke: #fde2c6; }
.ln .b { stroke: #ccd9e7; }
.ln .ticks { stroke: #eee; stroke-width: 9; stroke-dasharray: 3 9; }
```
